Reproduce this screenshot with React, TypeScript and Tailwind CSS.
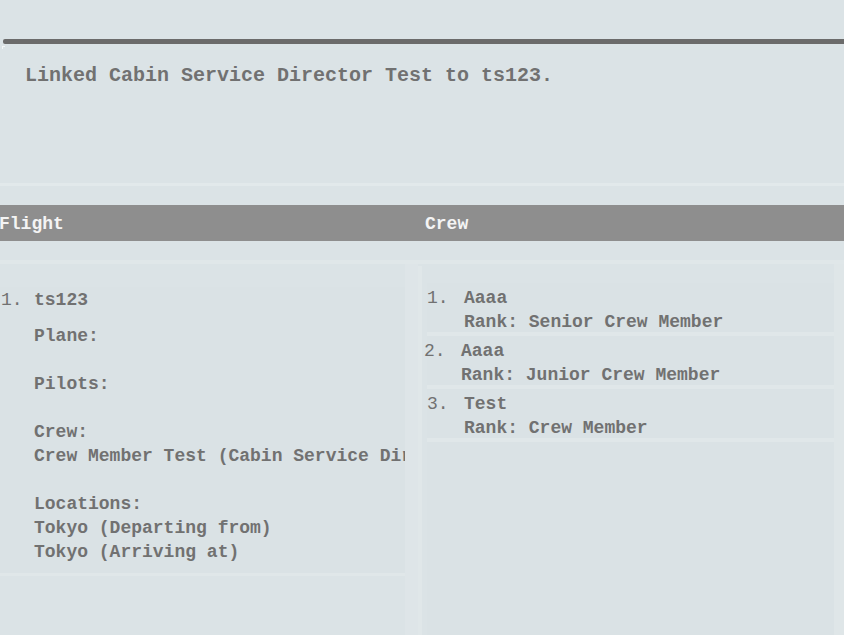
import React from "react";

const mono = "font-['Courier_New','Nimbus_Mono_PS','Nimbus_Mono_L','FreeMono','Liberation_Mono',monospace]";

function Line({ children, cls = "" }: { children?: React.ReactNode; cls?: string }) {
  return <div className={`h-[24px] leading-[24px] whitespace-nowrap ${cls}`}>{children}</div>;
}

export default function App() {
  const crew = [
    { n: "1.", name: "Aaaa", rank: "Senior Crew Member", shift: "" },
    { n: "2.", name: "Aaaa", rank: "Junior Crew Member", shift: "-ml-[3px]" },
    { n: "3.", name: "Test", rank: "Crew Member", shift: "" },
  ];
  return (
    <div className={`w-[844px] h-[635px] overflow-hidden bg-[#dbe3e6] text-[#717171] ${mono}`}>
      {/* message area */}
      <div className="h-[183px] pt-[39px]">
        <div className="ml-[3px] h-[5px] bg-[#6b6b6b] rounded-l-[2px]" />
        <div className="ml-[2px] mt-[2px] flex">
          <div className="w-[3px] h-[3px] border-l border-t border-[#f3f6f7]" />
          <div className="pl-[20px] pt-[18px] text-[20px] font-bold leading-[24px] whitespace-nowrap">
            Linked Cabin Service Director Test to ts123.
          </div>
        </div>
      </div>
      <div className="h-[3px] bg-[#e2e9eb]" />
      <div className="h-[19px]" />
      {/* header */}
      <div className="h-[36px] bg-[#8e8e8e] flex items-center pt-[3px] text-[18px] font-bold text-[#f4f4f4]">
        <div className="w-[418px] -ml-[1px]">Flight</div>
        <div className="pl-[8px]">Crew</div>
      </div>
      {/* body */}
      <div className="h-[19px]" />
      <div className="h-[4px] bg-[#e0e7e9]" />
      <div className="flex text-[18px]">
        {/* left */}
        <div className="w-[405px] shrink-0 pt-[23px]">
          <div className="bg-[#dae2e5] border-b-[3px] border-[#e0e7e9] pt-[1px] pb-[9px] overflow-hidden">
            <div className="flex">
              <div className="w-[34px] shrink-0 font-normal h-[24px] leading-[24px] pl-[1px]">1.</div>
              <div className="font-bold">
                <Line>ts123</Line>
                <div className="h-[12px]" />
                <Line>Plane:</Line>
                <Line />
                <Line>Pilots:</Line>
                <Line />
                <Line>Crew:</Line>
                <Line>Crew Member Test (Cabin Service Director)</Line>
                <Line />
                <Line>Locations:</Line>
                <Line>Tokyo (Departing from)</Line>
                <Line>Tokyo (Arriving at)</Line>
              </div>
            </div>
          </div>
        </div>
        <div className="w-[13px] shrink-0 bg-[#dee5e8] h-[400px]" />
        {/* right */}
        <div className="flex-1 flex h-[400px]">
          <div className="w-[4px] shrink-0 bg-[#e0e7e9] mt-[2px]" />
          <div className="w-[5px] shrink-0" />
          <div className="w-[407px] shrink-0 pt-[19px]">
            {crew.map((c, i) => (
              <div
                key={i}
                className="h-[53px] border-b-[4px] border-[#e0e7e9] pt-[3px] bg-[#dae2e5]"
              >
                <div className={`flex ${c.shift}`}>
                  <div className="w-[37px] shrink-0 font-normal h-[24px] leading-[24px]">{c.n}</div>
                  <div className="font-bold">
                    <Line>{c.name}</Line>
                    <Line>Rank: {c.rank}</Line>
                  </div>
                </div>
              </div>
            ))}
            <div className="h-[300px] bg-[#dae2e5]" />
          </div>
          <div className="flex-1 bg-[#dfe6e8]" />
        </div>
      </div>
    </div>
  );
}
